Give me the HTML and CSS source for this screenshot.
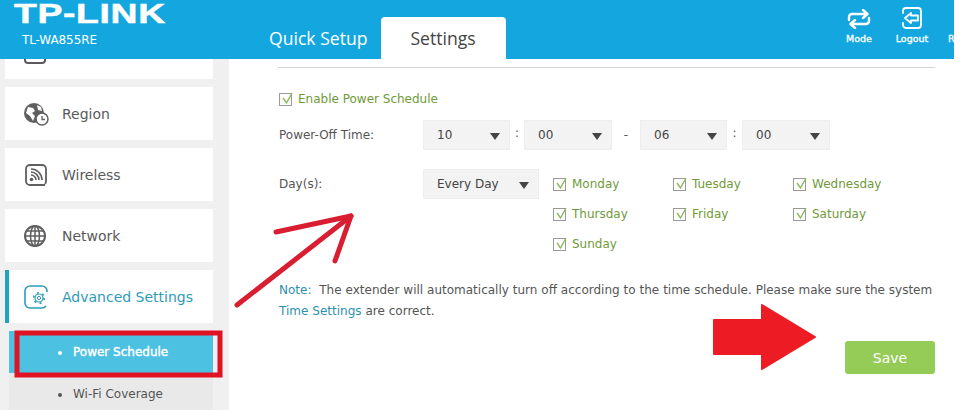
FILE: index.html
```html
<!DOCTYPE html>
<html lang="en">
<head>
  <meta charset="UTF-8">
  <title>TL-WA855RE</title>
  <link rel="stylesheet" href="styles.css">
</head>
<body>
  <div class="page">
    <header class="topbar">
      <div class="brand">
        <div class="logo">TP-LINK</div>
        <div class="model">TL-WA855RE</div>
      </div>
      <nav class="tabs">
        <a class="tab">Quick Setup</a>
        <a class="tab active">Settings</a>
      </nav>
      <div class="tools">
        <div class="tool">
          <svg width="24" height="20" viewBox="0 0 24 20" fill="none" stroke="#fff" stroke-width="2.400" stroke-linecap="round" stroke-linejoin="round">
            <path d="M2 11V8a3 3 0 0 1 3-3h15M16 1l4.500 4-4.500 4"/>
            <path d="M22 9v3a3 3 0 0 1-3 3H4M8 11l-4.500 4L8 19"/>
          </svg>
          <span>Mode</span>
        </div>
        <div class="tool">
          <svg width="22" height="22" viewBox="0 0 22 22" fill="none" stroke="#fff" stroke-width="1.800" stroke-linecap="round" stroke-linejoin="round">
            <path d="M2 6V4a3 3 0 0 1 3-3h12a3 3 0 0 1 3 3v14a3 3 0 0 1-3 3H5a3 3 0 0 1-3-3v-2"/>
            <path d="M10 6l-6 5 6 5v-2.500h7v-5h-7z"/>
          </svg>
          <span>Logout</span>
        </div>
        <div class="tool cut"><span>R</span></div>
      </div>
    </header>

    <div class="content">
      <aside class="sidebar">
        <div class="card stub">
          <svg width="22" height="6" viewBox="0 0 22 6" fill="none" stroke="#5a5a5a" stroke-width="2"><path d="M1 0v1a3 3 0 0 0 3 3h14a3 3 0 0 0 3-3V0"/></svg>
        </div>
        <div class="card">
          <svg class="ico" width="26" height="24" viewBox="0 0 26 24">
            <circle cx="11" cy="11" r="10" fill="#5f5f5f"/>
            <path d="M5 5l5 1 2 3-3 2 3 3-2 5-3-5-4-3zM14 3l4 2 1 4-4-1z" fill="#fff"/>
            <circle cx="19" cy="17" r="6" fill="#fff" stroke="#5f5f5f" stroke-width="1.500"/>
            <path d="M19 14v3.500h3" fill="none" stroke="#5f5f5f" stroke-width="1.300"/>
          </svg>
          <span>Region</span>
        </div>
        <div class="card">
          <svg class="ico" width="26" height="24" viewBox="0 0 26 24" fill="none" stroke="#5f5f5f">
            <path d="M22 22H7a4 4 0 0 1-4-4V6a4 4 0 0 1 4-4h12a4 4 0 0 1 4 4v12a4 4 0 0 1-1 3" stroke-width="1.800"/>
            <circle cx="8.500" cy="16.500" r="1.800" fill="#5f5f5f" stroke="none"/>
            <path d="M8 12a5 5 0 0 1 5 5M8 9a8 8 0 0 1 8 8M8 6a11 11 0 0 1 11 11" stroke-width="1.600"/>
          </svg>
          <span>Wireless</span>
        </div>
        <div class="card">
          <svg class="ico" width="26" height="24" viewBox="0 0 26 24" fill="none" stroke="#5f5f5f" stroke-width="1.500">
            <circle cx="12" cy="12" r="10" stroke-width="2"/>
            <ellipse cx="12" cy="12" rx="4.500" ry="10"/>
            <path d="M12 2v20M2 12h20M3.500 7h17M3.500 17h17"/>
          </svg>
          <span>Network</span>
        </div>
        <div class="card current">
          <svg class="ico" width="26" height="24" viewBox="0 0 26 24" fill="none" stroke="#2b9cb8">
            <path d="M24 7V6a5 5 0 0 0-5-5H7a5 5 0 0 0-5 5v12a5 5 0 0 0 5 5h12a5 5 0 0 0 4-2" stroke-width="1.600"/>
            <circle cx="16" cy="13" r="1.600" stroke-width="1"/>
            <circle cx="16" cy="13" r="4" stroke-width="1.200"/>
            <circle cx="16" cy="13" r="5.300" stroke-width="1.600" stroke-dasharray="2 3.550"/>
          </svg>
          <span>Advanced Settings</span>
        </div>
        <ul class="submenu">
          <li class="selected">Power Schedule</li>
          <li>Wi-Fi Coverage</li>
        </ul>
      </aside>

      <main class="panel">
        <div class="rule"></div>

        <label class="check enable"><i class="box"><svg width="14" height="14" viewBox="0 0 14 14"><path d="M3 6l3.500 5L12 1" fill="none" stroke="#8fb85a" stroke-width="1.400"/></svg></i>Enable Power Schedule</label>

        <div class="row time-row">
          <div class="label">Power-Off Time:</div>
          <div class="select sel-a">10</div>
          <span class="sep colon">:</span>
          <div class="select sel-b">00</div>
          <span class="sep dash">-</span>
          <div class="select sel-a">06</div>
          <span class="sep colon2">:</span>
          <div class="select sel-b">00</div>
        </div>

        <div class="row days-row">
          <div class="label">Day(s):</div>
          <div class="select sel-day">Every Day</div>
          <div class="days">
            <label class="check"><i class="box"><svg width="14" height="14" viewBox="0 0 14 14"><path d="M3 6l3.500 5L12 1" fill="none" stroke="#8fb85a" stroke-width="1.400"/></svg></i>Monday</label>
            <label class="check"><i class="box"><svg width="14" height="14" viewBox="0 0 14 14"><path d="M3 6l3.500 5L12 1" fill="none" stroke="#8fb85a" stroke-width="1.400"/></svg></i>Tuesday</label>
            <label class="check"><i class="box"><svg width="14" height="14" viewBox="0 0 14 14"><path d="M3 6l3.500 5L12 1" fill="none" stroke="#8fb85a" stroke-width="1.400"/></svg></i>Wednesday</label>
            <label class="check"><i class="box"><svg width="14" height="14" viewBox="0 0 14 14"><path d="M3 6l3.500 5L12 1" fill="none" stroke="#8fb85a" stroke-width="1.400"/></svg></i>Thursday</label>
            <label class="check"><i class="box"><svg width="14" height="14" viewBox="0 0 14 14"><path d="M3 6l3.500 5L12 1" fill="none" stroke="#8fb85a" stroke-width="1.400"/></svg></i>Friday</label>
            <label class="check"><i class="box"><svg width="14" height="14" viewBox="0 0 14 14"><path d="M3 6l3.500 5L12 1" fill="none" stroke="#8fb85a" stroke-width="1.400"/></svg></i>Saturday</label>
            <label class="check"><i class="box"><svg width="14" height="14" viewBox="0 0 14 14"><path d="M3 6l3.500 5L12 1" fill="none" stroke="#8fb85a" stroke-width="1.400"/></svg></i>Sunday</label>
          </div>
        </div>

        <p class="note"><span class="blue">Note:</span>&nbsp; The extender will automatically turn off according to the time schedule. Please make sure the system <span class="blue">Time Settings</span> are correct.</p>

        <div class="actions"><button class="save">Save</button></div>
      </main>
    </div>

    <!-- red marks drawn over the screenshot -->
    <svg class="marks" width="964" height="410" viewBox="0 0 964 410">
      <rect x="17" y="333" width="203" height="42" fill="none" stroke="#e01325" stroke-width="5"/>
      <g fill="none" stroke="#d81e30" stroke-width="5" stroke-linecap="round" stroke-linejoin="round">
        <path d="M237 305L351 216"/>
        <path d="M276 232L351 216L335 261"/>
      </g>
      <path d="M714 320H762V305L815 337L762 369V354H714z" fill="#ed1c24" stroke="#ed1c24" stroke-width="2" stroke-linejoin="round"/>
    </svg>
  </div>
</body>
</html>
```

FILE: styles.css
```css
* {
  box-sizing: border-box;
}

html, body {
  margin: 0;
  padding: 0;
  background: #fff;
  overflow: hidden;
}

.page {
  position: relative;
  width: 964px;
  height: 410px;
  overflow: hidden;
  font-family: "DejaVu Sans", Verdana, sans-serif;
  font-size: 12px;
  color: #555;
}

.topbar {
  display: flex;
  width: 954px;
  height: 59px;
  background: #14a7df;
  color: #fff;
  overflow: hidden;
}

.brand {
  flex: none;
  width: 269px;
  padding: 1px 0 0 14px;
}

.logo {
  font-family: "Liberation Sans", Arial, sans-serif;
  font-weight: bold;
  font-size: 27px;
  line-height: 26px;
  letter-spacing: 0.5px;
  -webkit-text-stroke: 0.5px #fff;
  transform: scaleX(1.380);
  transform-origin: left;
}

.model {
  margin: 6px 0 0 8px;
  font-size: 12px;
  line-height: 14px;
  letter-spacing: -0.1px;
}

.tabs {
  flex: none;
  display: flex;
  align-items: flex-end;
  gap: 13px;
  width: 557px;
  font-family: "Open Sans", sans-serif;
  font-size: 17.600px;
}

.tab {
  height: 42px;
  line-height: 43px;
}

.tab.active {
  width: 125px;
  background: #fff;
  border-radius: 4px 4px 0 0;
  color: #444;
  text-align: center;
}

.tools {
  flex: none;
  display: flex;
  margin-left: 10px;
  font-size: 9.500px;
  -webkit-text-stroke: 0.3px #fff;
}

.tool {
  display: flex;
  flex-direction: column;
  align-items: center;
  justify-content: flex-end;
  width: 46px;
  height: 44px;
  margin-right: 7px;
}

.tool.cut {
  width: 10px;
  margin: 0 0 0 6px;
  align-items: flex-start;
}

.tool svg {
  margin-bottom: 4px;
}

.content {
  display: flex;
  width: 954px;
  height: 351px;
}

.sidebar {
  flex: none;
  width: 229px;
  padding-left: 5px;
  background: #f0f0f0;
  overflow: hidden;
}

.card {
  display: flex;
  align-items: center;
  width: 208px;
  height: 53px;
  margin-bottom: 8px;
  padding-left: 18px;
  background: #fff;
  font-size: 14px;
  color: #5a5a5a;
}

.card .ico {
  flex: none;
  margin-right: 13px;
}

.card.stub {
  height: 20px;
  align-items: flex-start;
  padding-left: 19px;
}

.card.current {
  margin-bottom: 8px;
  padding-left: 14px;
  border-left: 4px solid #1fa3c2;
  color: #2f9bb8;
}

.submenu {
  width: 204px;
  margin: 0 0 0 4px;
  padding: 0;
  list-style: none;
  background: #e9e9e9;
}

.submenu li {
  position: relative;
  height: 42px;
  padding-left: 64px;
  font-size: 12px;
  line-height: 42px;
  color: #555;
}

.submenu li::before {
  content: "";
  position: absolute;
  left: 49px;
  top: 20px;
  width: 4px;
  height: 4px;
  border-radius: 50%;
  background: currentColor;
}

.submenu li.selected {
  background: #4dc1e2;
  color: #fff;
  -webkit-text-stroke: 0.4px #fff;
}

.panel {
  flex: 1;
  padding: 8px 19px 0 50px;
}

.rule {
  margin-left: -1px;
  height: 1px;
  background: #d6d6d6;
}

.check {
  display: flex;
  align-items: center;
  color: #6f9a3a;
}

.box {
  flex: none;
  width: 13px;
  height: 13px;
  margin-right: 6px;
  border: 1px solid #9a9a9a;
}

.box svg {
  display: block;
  margin: -2px 0 0 0;
}

.enable {
  margin-top: 24px;
  height: 14px;
}

.row {
  display: flex;
  margin-top: 14px;
}

.label {
  flex: none;
  width: 144px;
  line-height: 30px;
}

.select {
  position: relative;
  flex: none;
  height: 30px;
  padding-left: 13px;
  background: #f3f3f3;
  border: 1px solid #eee;
  color: #444;
  line-height: 28px;
}

.select::after {
  content: "";
  position: absolute;
  right: 9px;
  top: 12px;
  border-style: solid;
  border-width: 7px 5px 0;
  border-color: #444 transparent transparent;
}

.sel-a {
  width: 87px;
}

.sel-b {
  width: 88px;
}

.sel-day {
  width: 116px;
}

.sep {
  flex: none;
  line-height: 26px;
  text-align: center;
}

.colon {
  width: 14px;
}

.dash {
  width: 28px;
  line-height: 30px;
}

.colon2 {
  width: 15px;
}

.days-row {
  margin-top: 19px;
}

.days {
  display: grid;
  grid-template-columns: repeat(3, 120px);
  grid-auto-rows: 30px;
  align-items: center;
  margin-left: 14px;
}

.note {
  margin: 21px 0 0;
  line-height: 21px;
  word-spacing: 0.100px;
}

.blue {
  color: #2f8fb0;
}

.actions {
  display: flex;
  justify-content: flex-end;
  margin-top: 19px;
}

.save {
  width: 90px;
  height: 33px;
  padding: 0;
  border: none;
  border-radius: 3px;
  background: #95cb57;
  color: #fff;
  font-family: inherit;
  font-size: 14px;
}

.marks {
  position: absolute;
  left: 0;
  top: 0;
  pointer-events: none;
}
```
